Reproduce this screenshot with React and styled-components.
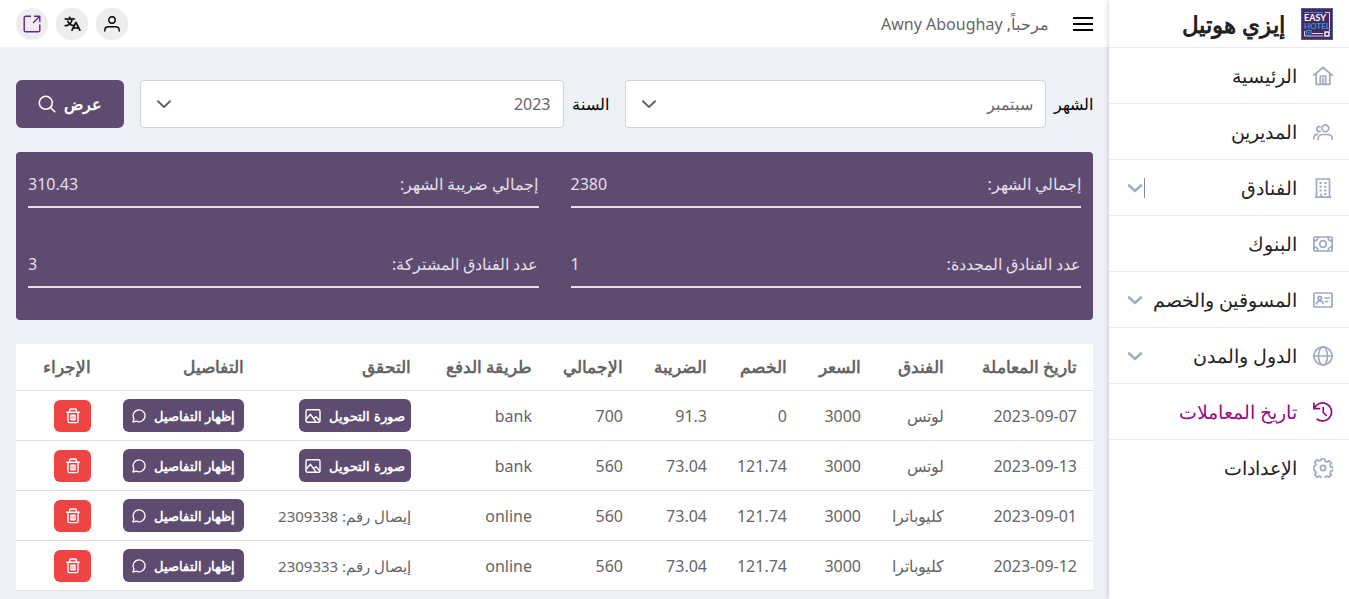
import React, { useState } from 'react';
import styled, { createGlobalStyle, ThemeProvider, css } from 'styled-components';
import { PiTranslate } from 'react-icons/pi';

const theme = {
  brand: '#5d4c70',
  accent: '#990a85',
  danger: '#ef4444',
  page: '#eef1f6',
  line: '#dee2e6',
  soft: '#ebebeb',
  text: '#666666',
  icon: '#9faabf',
};

const GlobalStyle = createGlobalStyle`
  *, *::before, *::after { box-sizing: border-box; }
  body {
    margin: 0;
    background: ${theme.page};
    color: ${theme.text};
    font-family: 'Noto Sans', 'Open Sans', sans-serif;
    font-size: 16px;
    line-height: 24px;
  }
  button, select { font: inherit; color: inherit; }
  button { border: 0; padding: 0; background: none; cursor: pointer; }
  a { color: inherit; text-decoration: none; }
`;

const Layout = styled.div`
  display: flex;
  min-height: 100vh;
`;

const Sidebar = styled.aside`
  flex: 0 0 240px;
  background: #fff;
  box-shadow: 0 0 6px rgba(0, 0, 0, 0.2);
  z-index: 1;
`;

const Brand = styled.div`
  display: flex;
  align-items: center;
  gap: 16px;
  height: 48px;
  padding: 0 16px;
  border-bottom: 1px solid ${(p) => p.theme.soft};
`;

const BrandName = styled.h1`
  margin: 0;
  color: #222;
  font-size: 23px;
  font-weight: 600;
  line-height: 32px;
`;

const Menu = styled.ul`
  margin: 0;
  padding: 0;
  list-style: none;
`;

const MenuItem = styled.li`
  border-bottom: ${(p) => (p.$last ? 0 : 1)}px solid ${(p) => p.theme.soft};
`;

const entry = css`
  display: flex;
  align-items: center;
  gap: 8px;
  width: 100%;
  height: 55px;
  padding: 0 16px;
  color: ${(p) => (p.$active ? p.theme.accent : '#222')};
  font-size: 19px;
  text-align: start;
  white-space: nowrap;

  > svg {
    flex: none;
    margin-inline-end: 8px;
    color: ${(p) => (p.$active ? p.theme.accent : p.theme.icon)};
  }
`;

const MenuLink = styled.a`${entry}`;
const MenuToggle = styled.button`${entry}`;

const MenuText = styled.span`
  flex: 1;
`;

const ToggleMark = styled.span`
  display: flex;
  align-items: center;
  justify-content: center;
  width: 20px;
  height: 20px;
  color: ${(p) => p.theme.icon};
  border-inline-start: ${(p) => (p.$ruled ? 1 : 0)}px solid #8184a0;
`;

const Main = styled.main`
  flex: 1;
  min-width: 0;
`;

const TopBar = styled.header`
  display: flex;
  align-items: center;
  gap: 24px;
  height: 47px;
  padding: 0 16px;
  background: #fff;
`;

const BurgerButton = styled.button`
  display: flex;
  color: #000;
`;

const Greeting = styled.p`
  flex: 1;
  margin: 0;
`;

const Actions = styled.div`
  display: flex;
  gap: 8px;
`;

const round = css`
  display: flex;
  align-items: center;
  justify-content: center;
  width: 32px;
  height: 32px;
  border-radius: 50%;
  background: #eee;
  color: #000;
`;

const RoundButton = styled.button`${round}`;
const RoundLink = styled.a`
  ${round}
  color: #6b1f9b;
`;

const Content = styled.div`
  display: flex;
  flex-direction: column;
  gap: 24px;
  padding: 33px 16px 8px;
`;

const Filters = styled.form`
  display: flex;
  gap: 16px;
`;

const Field = styled.div`
  display: flex;
  flex: 1;
  align-items: center;
  gap: 8px;
`;

const FieldLabel = styled.label`
  min-width: 36px;
  color: #000;
`;

const SelectBox = styled.div`
  position: relative;
  flex: 1;

  > svg {
    position: absolute;
    inset-inline-end: 16px;
    top: 16px;
    pointer-events: none;
  }
`;

const Select = styled.select`
  display: block;
  width: 100%;
  height: 48px;
  padding: 0 12px;
  border: 1px solid #ced4da;
  border-radius: 4px;
  background: #fff;
  appearance: none;
`;

const ShowButton = styled.button`
  display: flex;
  align-items: center;
  justify-content: center;
  gap: 8px;
  width: 108px;
  height: 48px;
  border-radius: 6px;
  background: ${(p) => p.theme.brand};
  color: #fff;
  font-weight: 700;
`;

const Summary = styled.dl`
  display: grid;
  grid-template-columns: 1fr 1fr;
  gap: 36px 32px;
  margin: 0;
  padding: 12px 12px 32px;
  border-radius: 4px;
  background: ${(p) => p.theme.brand};
  color: #e6dfe8;
`;

const SummaryItem = styled.div`
  display: flex;
  justify-content: space-between;
  height: 44px;
  padding-top: 8px;
  border-bottom: 2px solid #e6dfe8;
`;

const SummaryName = styled.dt`
  white-space: nowrap;
`;

const SummaryValue = styled.dd`
  margin: 0;
`;

const Table = styled.table`
  width: 100%;
  table-layout: fixed;
  border-collapse: separate;
  border-spacing: 0;
  background: #fff;
`;

const Column = styled.col`
  width: calc(100% * ${(p) => p.$share} / 1077);
`;

const HeadCell = styled.th`
  height: 47px;
  padding: 0 16px;
  border-bottom: 1px solid ${(p) => p.theme.line};
  font-size: 17px;
  font-weight: 600;
  text-align: start;
  white-space: nowrap;
`;

const Cell = styled.td`
  height: 50px;
  padding: 0 16px;
  border-bottom: 1px solid ${(p) => p.theme.line};
  text-align: start;
  white-space: nowrap;
`;

const Receipt = styled.span`
  font-size: 15px;
`;

const RowButton = styled.button`
  display: flex;
  align-items: center;
  justify-content: center;
  gap: 8px;
  width: ${(p) => p.$width}px;
  height: ${(p) => (p.$danger ? 32 : 33)}px;
  border-radius: 6px;
  background: ${(p) => (p.$danger ? p.theme.danger : p.theme.brand)};
  color: #fff;
  font-size: 13px;
  font-weight: 700;
`;

const Svg = ({ size = 20, weight = 1.7, box = 20, children }) => (
  <svg
    width={size}
    height={size}
    viewBox={`0 0 ${box} ${box}`}
    fill="none"
    stroke="currentColor"
    strokeWidth={weight}
    strokeLinecap="round"
    strokeLinejoin="round"
    aria-hidden="true"
  >
    {children}
  </svg>
);

const HomeIcon = () => (
  <Svg><path d="M.9 9.200 10 1.500l9.100 7.700M3.200 7.500V18.300h13.600V7.500M7.300 18V10h5.400v8M10 12v6" /></Svg>
);
const ManagersIcon = () => (
  <Svg>
    <circle cx="12.300" cy="6.200" r="3.400" />
    <path d="M5.200 17.500v-1c0-2.300 2-4 4.500-4h5c2.500 0 4.500 1.700 4.500 4v.8M7 4.700A2.500 2.500 0 1 0 7.200 9.300M.9 16.800v-1.300c0-1.800 1.400-3.100 3.500-3.100" />
  </Svg>
);
const HotelIcon = () => (
  <Svg>
    <path d="M3.500 19V1h13v18M1.800 19.200h16.400M8.200 19v-3.500" strokeLinecap="butt" />
    <path d="M6.500 5h2.200M11.300 5h2.200M6.500 8.800h2.200M11.300 8.800h2.200M6.500 12.600h2.200M11.300 12.600h2.200M11.300 16h2.200" strokeWidth="2" strokeLinecap="butt" />
  </Svg>
);
const BankIcon = () => (
  <Svg>
    <rect x=".9" y="3" width="18.200" height="14" rx="1" />
    <circle cx="10" cy="10" r="3.300" />
    <path d="M5 3.200C5 5.500 3.500 7 1 7M15 3.200C15 5.500 16.500 7 19 7M5 16.800C5 14.500 3.500 13 1 13M15 16.800c0-2.300 1.500-3.800 4-3.800" />
  </Svg>
);
const CardIcon = () => (
  <Svg>
    <rect x=".9" y="3" width="18.200" height="14" rx="1" />
    <circle cx="6.800" cy="8" r="1.700" />
    <path d="M3.500 13.700c.3-2 1.500-2.800 3.300-2.800s3 .8 3.300 2.800M12.300 8h4M12.300 11.500h2.500" />
  </Svg>
);
const GlobeIcon = () => (
  <Svg>
    <circle cx="10" cy="10" r="9.100" />
    <ellipse cx="10" cy="10" rx="4.500" ry="9.100" />
    <path d="M.9 10h18.200" />
  </Svg>
);
const HistoryIcon = () => (
  <Svg>
    <path d="M.9 1.300v5.400h5.600M1.200 6.500A9 9 0 1 1 4.200 17.200M10.300 5.500v5l3 3" />
  </Svg>
);
const GearIcon = () => (
  <Svg>
    <circle cx="10" cy="10" r="2.600" />
    <path d="M8.300 1h3.400l.5 2.300 1.600.7 2-1.300 2.500 2.500-1.300 2 .7 1.600 2.300.5v3.400l-2.300.5-.7 1.600 1.300 2-2.500 2.500-2-1.300-1.600.7-.5 2.300H8.300l-.5-2.300-1.600-.7-2 1.300-2.500-2.500 1.300-2-.7-1.600L0.900 11.700V8.300l1.400-.5.7-1.600-1.300-2 2.500-2.500 2 1.300 1.600-.7z" />
  </Svg>
);
const ChevronIcon = ({ size, weight }) => (
  <Svg size={size} weight={weight} box={16}><path d="m2 5.300 6 5.700 6-5.700" /></Svg>
);
const BurgerIcon = () => (
  <Svg weight={2}><path d="M0 4h20M0 10h20M0 16h20" strokeLinecap="butt" /></Svg>
);
const PersonIcon = () => (
  <Svg size={16} box={16} weight={1.4}>
    <circle cx="8" cy="4" r="3.200" />
    <path d="M.8 15v-.8c0-2.200 1.800-3.500 4-3.500h6.400c2.200 0 4 1.300 4 3.500v.8" />
  </Svg>
);
const OpenIcon = () => (
  <Svg size={18} box={18} weight={1.4}>
    <path d="M7.500 1.200H2.700A1.500 1.500 0 0 0 1.200 2.700v12.600a1.500 1.500 0 0 0 1.500 1.500h12.600a1.500 1.500 0 0 0 1.500-1.500V10M11.500 1.200h5.300v5.300M16.500 1.500 10.500 7.500" />
  </Svg>
);
const SearchIcon = () => (
  <Svg size={18} box={18} weight={1.6}>
    <circle cx="7.800" cy="7.800" r="6.500" />
    <path d="m12.500 12.500 4.300 4.200" />
  </Svg>
);
const TrashIcon = () => (
  <Svg size={16} box={16} weight={1.4}>
    <path d="M1.800 4.200h12.400M4.700 4V2c0-.6.4-1 1-1h4.600c.6 0 1 .4 1 1v2M3 4.500v8.800c0 .8.500 1.300 1.300 1.300h7.400c.8 0 1.300-.5 1.300-1.300V4.500M6 7.300v4.400h4V7.300zM8 7.300v4.400" />
  </Svg>
);
const ChatIcon = () => (
  <Svg size={14} box={14} weight={1.3}>
    <path d="M7.200.8a6 6 0 0 0-5.300 8.900L.9 13l3.500-.8A6 6 0 1 0 7.200.8z" />
  </Svg>
);
const ImageIcon = () => (
  <Svg size={16} box={16} weight={1.4}>
    <rect x="1" y="1.800" width="14" height="12.400" rx="1.500" />
    <path d="m1.300 11 4.200-4.700 5 7M8.800 10.500l2.200-1.800 3.700 4" />
  </Svg>
);

const Logo = () => (
  <svg width="32" height="32" viewBox="0 0 32 32" direction="ltr" role="img" aria-label="Easy Hotel">
    <rect width="32" height="32" fill="#46295f" />
    <rect x=".5" y=".5" width="31" height="31" fill="none" stroke="#5479a8" strokeDasharray="2 1" />
    <path d="M3 4.500h19" stroke="#3b91cf" strokeWidth="1" />
    <path d="M24 4.500h4.500V23" fill="none" stroke="#ddd5e5" strokeWidth="1" />
    <g fontFamily="Lato, sans-serif" fontWeight="700">
      <text x="3" y="13" fill="#fff" fontSize="9">EASY</text>
      <text x="3" y="21" fill="#3197d3" fontSize="8">HOTEL</text>
    </g>
    <path d="M3.500 23v5h19M11 25.500h11" fill="none" stroke="#ddd5e5" strokeWidth="1" />
    <path d="M5.500 26.500v-4H10v4M7.800 26.500V24" fill="none" stroke="#3b91cf" strokeWidth="1.2" />
    <rect x="24" y="24" width="4" height="4" fill="none" stroke="#fff" strokeWidth="1.4" />
  </svg>
);

const menu = [
  { text: 'الرئيسية', icon: HomeIcon },
  { text: 'المديرين', icon: ManagersIcon },
  { text: 'الفنادق', icon: HotelIcon, opens: true, ruled: true },
  { text: 'البنوك', icon: BankIcon },
  { text: 'المسوقين والخصم', icon: CardIcon, opens: true },
  { text: 'الدول والمدن', icon: GlobeIcon, opens: true },
  { text: 'تاريخ المعاملات', icon: HistoryIcon, active: true },
  { text: 'الإعدادات', icon: GearIcon },
];

const summary = [
  ['إجمالي الشهر:', '2380'],
  ['إجمالي ضريبة الشهر:', '310.43'],
  ['عدد الفنادق المجددة:', '1'],
  ['عدد الفنادق المشتركة:', '3'],
];

const columns = [
  ['تاريخ المعاملة', 133],
  ['الفندق', 83],
  ['السعر', 74],
  ['الخصم', 80],
  ['الضريبة', 84],
  ['الإجمالي', 91],
  ['طريقة الدفع', 121],
  ['التحقق', 167],
  ['التفاصيل', 153],
  ['الإجراء', 91],
];

const rows = [
  { cells: ['2023-09-07', 'لوتس', '3000', '0', '91.3', '700', 'bank'] },
  { cells: ['2023-09-13', 'لوتس', '3000', '121.74', '73.04', '560', 'bank'] },
  { cells: ['2023-09-01', 'كليوباترا', '3000', '121.74', '73.04', '560', 'online'], receipt: '2309338' },
  { cells: ['2023-09-12', 'كليوباترا', '3000', '121.74', '73.04', '560', 'online'], receipt: '2309333' },
];

const months = ['يناير', 'فبراير', 'مارس', 'أبريل', 'مايو', 'يونيو', 'يوليو', 'أغسطس', 'سبتمبر', 'أكتوبر', 'نوفمبر', 'ديسمبر'];
const years = ['2022', '2023', '2024'];

function SelectField({ id, label, options, initial }) {
  const [value, setValue] = useState(initial);
  return (
    <Field>
      <FieldLabel htmlFor={id}>{label}</FieldLabel>
      <SelectBox>
        <Select id={id} value={value} onChange={(e) => setValue(e.target.value)}>
          {options.map((o) => <option key={o}>{o}</option>)}
        </Select>
        <ChevronIcon size={16} weight={2} />
      </SelectBox>
    </Field>
  );
}

export default function App() {
  return (
    <ThemeProvider theme={theme}>
      <GlobalStyle />
      <Layout dir="rtl" lang="ar">
        <Sidebar>
          <Brand>
            <Logo />
            <BrandName>إيزي هوتيل</BrandName>
          </Brand>
          <nav>
            <Menu>
              {menu.map(({ text, icon: Icon, opens, ruled, active }, i) => (
                <MenuItem key={text} $last={i === menu.length - 1}>
                  {opens ? (
                    <MenuToggle type="button" aria-expanded="false">
                      <Icon />
                      <MenuText>{text}</MenuText>
                      <ToggleMark $ruled={ruled}><ChevronIcon size={16} weight={2.5} /></ToggleMark>
                    </MenuToggle>
                  ) : (
                    <MenuLink href="#" $active={active}>
                      <Icon />
                      <MenuText>{text}</MenuText>
                    </MenuLink>
                  )}
                </MenuItem>
              ))}
            </Menu>
          </nav>
        </Sidebar>

        <Main>
          <TopBar>
            <BurgerButton type="button" aria-label="القائمة"><BurgerIcon /></BurgerButton>
            <Greeting>مرحباً, Awny Aboughay</Greeting>
            <Actions>
              <RoundButton type="button" aria-label="الحساب"><PersonIcon /></RoundButton>
              <RoundButton type="button" aria-label="اللغة"><PiTranslate size={18} strokeWidth={8} /></RoundButton>
              <RoundLink href="#" aria-label="الموقع"><OpenIcon /></RoundLink>
            </Actions>
          </TopBar>

          <Content>
            <Filters onSubmit={(e) => e.preventDefault()}>
              <SelectField id="month" label="الشهر" options={months} initial="سبتمبر" />
              <SelectField id="year" label="السنة" options={years} initial="2023" />
              <ShowButton type="submit">عرض<SearchIcon /></ShowButton>
            </Filters>

            <Summary>
              {summary.map(([name, value]) => (
                <SummaryItem key={name}>
                  <SummaryName>{name}</SummaryName>
                  <SummaryValue>{value}</SummaryValue>
                </SummaryItem>
              ))}
            </Summary>

            <Table>
              <colgroup>
                {columns.map(([name, share]) => <Column key={name} $share={share} />)}
              </colgroup>
              <thead>
                <tr>{columns.map(([name]) => <HeadCell key={name} scope="col">{name}</HeadCell>)}</tr>
              </thead>
              <tbody>
                {rows.map(({ cells, receipt }) => (
                  <tr key={cells[0]}>
                    {cells.map((c, i) => <Cell key={i}>{c}</Cell>)}
                    <Cell>
                      {receipt ? <Receipt>إيصال رقم: {receipt}</Receipt> : (
                        <RowButton type="button" $width={112}>صورة التحويل<ImageIcon /></RowButton>
                      )}
                    </Cell>
                    <Cell><RowButton type="button" $width={121}>إظهار التفاصيل<ChatIcon /></RowButton></Cell>
                    <Cell><RowButton type="button" $width={37} $danger aria-label="حذف"><TrashIcon /></RowButton></Cell>
                  </tr>
                ))}
              </tbody>
            </Table>
          </Content>
        </Main>
      </Layout>
    </ThemeProvider>
  );
}
